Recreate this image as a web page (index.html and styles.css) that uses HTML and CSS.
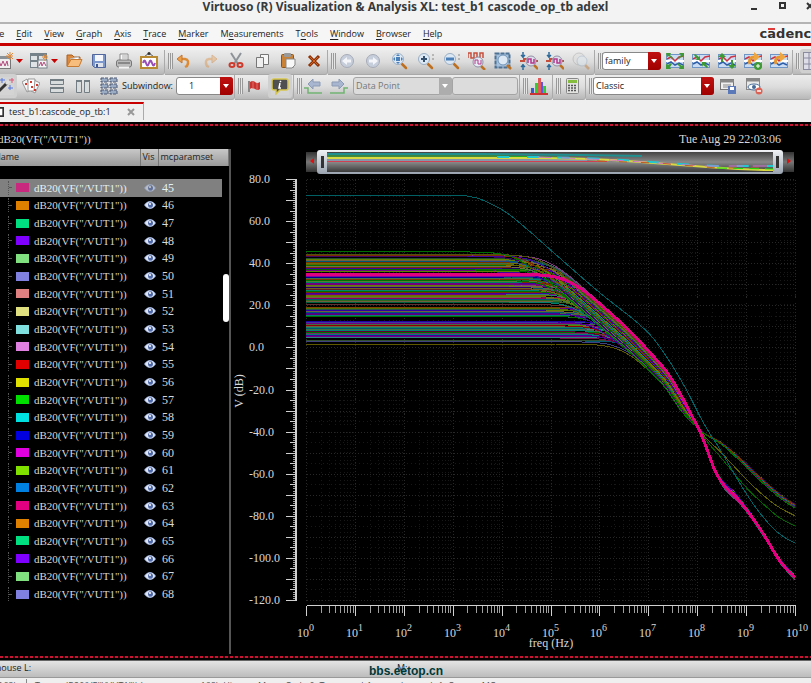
FILE: index.html
```html
<!DOCTYPE html>
<html lang="en">
  <head>
    <meta charset="UTF-8" />
    <meta name="viewport" content="width=device-width, initial-scale=1.0" />
    <title>Virtuoso (R) Visualization &amp; Analysis XL</title>
    <link rel="stylesheet" href="styles.css">
  </head>
  <body>
    <!-- Icon sprite -->
    <svg class="sprite" aria-hidden="true">
      <symbol id="i-graph" viewBox="0 0 18 18">
        <rect x="0.5" y="4.5" width="15" height="12" fill="#eee" stroke="#777" />
        <rect x="0" y="4" width="16" height="3" fill="#8a9297" />
        <path d="M2 14l2-5 2 5 2-5 2 5 2-5 1 5" fill="none" stroke="#b34a7c" />
        <path d="M15 0v8M11 4h7M12 1l6 6M18 1l-6 6" stroke="#dd8a3c" />
      </symbol>
      <symbol id="i-subgraph" viewBox="0 0 18 18">
        <rect x="0.5" y="1.5" width="16" height="14" fill="#dfe3e5" stroke="#76828a" />
        <path d="M0 3h17M1 9h8M8 3v12" stroke="#76828a" stroke-width="2" />
        <rect x="8" y="8" width="9" height="8" fill="#f5f5f5" stroke="#76828a" />
        <path d="M9 14l2-4 1 4 2-4 2 4" fill="none" stroke="#b34a7c" />
        <path d="M15 2v7M12 5h6M13 3l4 4M17 3l-4 4" stroke="#dd8a3c" />
      </symbol>
      <symbol id="i-open" viewBox="0 0 18 18">
        <path d="M2 14V3h5l2 2h6v3" fill="#dc8a3e" stroke="#a85f20" />
        <path d="M5 7l8-2 2 3" fill="#fff" stroke="#bbb" />
        <path d="M2 14.500l4-7h11l-3 7z" fill="#f6bd7d" stroke="#c67a32" />
      </symbol>
      <symbol id="i-save" viewBox="0 0 18 18">
        <path d="M2.500 2.500h13v13h-11l-2-2z" fill="#7d98cc" stroke="#50669c" />
        <rect x="5" y="3" width="8" height="6" fill="#f4f6fb" />
        <rect x="5" y="11" width="8" height="4" fill="#dfe3ec" />
        <rect x="6" y="12" width="2" height="3" fill="#40568f" />
      </symbol>
      <symbol id="i-print" viewBox="0 0 18 18">
        <path d="M5 8V2h8v6" fill="#fbfbfb" stroke="#888" />
        <path d="M7 4h5M7 6h5" stroke="#aaa" />
        <rect x="1.500" y="8" width="15" height="7" rx="2" fill="#bcbcbc" stroke="#777" />
        <path d="M3 11h12" stroke="#888" stroke-width="2" />
        <path d="M4 15.500h10" stroke="#f2f2f2" stroke-width="2" />
      </symbol>
      <symbol id="i-snap" viewBox="0 0 18 18">
        <path d="M4 5l5-4 5 4" fill="none" stroke="#555" />
        <circle cx="9" cy="1.500" r="1.500" fill="#333" />
        <rect x="1" y="5" width="16" height="11" fill="#fff" stroke="#b98a32" stroke-width="2" />
        <path d="M3 11q1.500-5 3 0t3 0 3 0 3 0" fill="none" stroke="#9a4fb8" stroke-width="2" />
      </symbol>
      <symbol id="i-undo" viewBox="0 0 18 18">
        <path d="M5 7h5q5 1 2 7l-2 1" fill="none" stroke="#dd8a35" stroke-width="2.500" />
        <path d="M2 7l5-4v8z" fill="#eba04c" stroke="#c87528" />
      </symbol>
      <symbol id="i-cut" viewBox="0 0 18 18">
        <path d="M4 1l7 11M14 1L7 12" stroke="#8d9398" stroke-width="2" />
        <ellipse cx="5" cy="13" rx="2.500" ry="2" fill="none" stroke="#cc3b2d" stroke-width="2" />
        <ellipse cx="13" cy="13" rx="2.500" ry="2" fill="none" stroke="#cc3b2d" stroke-width="2" />
      </symbol>
      <symbol id="i-copy" viewBox="0 0 18 18">
        <path d="M7.500 2.500h8v10h-8z" fill="#f7f7f7" stroke="#777" />
        <path d="M3.500 5.500h7v10h-7z" fill="#efefef" stroke="#777" />
      </symbol>
      <symbol id="i-paste" viewBox="0 0 18 18">
        <rect x="2.500" y="2.500" width="12" height="13" rx="1" fill="#c98236" stroke="#8e5518" />
        <rect x="5" y="1" width="7" height="4" rx="1" fill="#999" />
        <path d="M7 7h9v6l-3 3H7z" fill="#f8f8f8" stroke="#888" />
      </symbol>
      <symbol id="i-delete" viewBox="0 0 18 18">
        <path d="M4 4l10 10M14 4L4 14" stroke="#8d3208" stroke-width="3" />
        <path d="M5 5l8 8M13 5l-8 8" stroke="#d4631a" stroke-width="1" />
      </symbol>
      <symbol id="i-back" viewBox="0 0 18 18">
        <circle cx="9" cy="9" r="6.500" fill="#c6cddb" stroke="#a6abb6" />
        <path d="M4 9l5-4v2.500h4v3H9V13z" fill="#f3f5f9" />
      </symbol>
      <symbol id="lens" viewBox="0 0 18 18">
        <path d="M12 12l4 4" stroke="#bd7022" stroke-width="2.500" stroke-linecap="round" />
        <circle cx="8" cy="7" r="5.500" fill="#dce9f5" stroke="#9aaec4" stroke-width="1" />
      </symbol>
      <symbol id="i-zfit" viewBox="0 0 18 18">
        <use href="#lens" />
        <path d="M8 2l2 2H6zM8 12l2-2H6zM3 7l2-2v4zM13 7l-2-2v4zM6 5h4v4H6z" fill="#4a7fb8" />
      </symbol>
      <symbol id="i-zin" viewBox="0 0 18 18">
        <use href="#lens" />
        <path d="M8 4v6M5 7h6" stroke="#34506f" stroke-width="2" />
        <path d="M17 2v2M17 6v2" stroke="#888" />
      </symbol>
      <symbol id="i-zout" viewBox="0 0 18 18">
        <use href="#lens" />
        <path d="M4 7h8" stroke="#4a7fb8" stroke-width="3" />
        <path d="M17 2v2M17 6v2" stroke="#888" />
      </symbol>
      <symbol id="i-zwave" viewBox="0 0 18 18">
        <path d="M0 6V1h3v5h3V1h3v5h3V1h3v5" fill="none" stroke="#c64e3c" stroke-width="1.500" />
        <path d="M13 14l4 4" stroke="#bd7022" stroke-width="2.500" />
        <circle cx="10" cy="10" r="5" fill="#e6eaf2" stroke="#8f8fa6" />
        <path d="M7 12V8h3v4h3V8" fill="none" stroke="#b3398d" />
      </symbol>
      <symbol id="i-zbox" viewBox="0 0 18 18">
        <rect x="1.500" y="1.500" width="14" height="14" fill="#a5c0dc" stroke="#4d7193" stroke-width="2" stroke-dasharray="4 1" />
        <path d="M13 13l4 4" stroke="#bd7022" stroke-width="2.500" />
        <circle cx="9" cy="8" r="5" fill="#dce9f5" stroke="#6f93b6" />
      </symbol>
      <symbol id="i-zy" viewBox="0 0 18 18">
        <path d="M3 0v6M1 3l2 2 2-2M3 18v-6M1 15l2-2 2 2" fill="none" stroke="#2c6a9c" stroke-width="1.500" />
        <path d="M0 9h4V7h4M14 9h4" fill="none" stroke="#c64e3c" stroke-width="2" />
        <path d="M14 13l4 4" stroke="#bd7022" stroke-width="2.500" />
        <circle cx="11" cy="9" r="5" fill="#dddfea" stroke="#8f8fa6" />
        <path d="M8 11V7h3v4h3V7" fill="none" stroke="#b3398d" stroke-width="1.500" />
      </symbol>
      <symbol id="i-zoff" viewBox="0 0 18 18">
        <circle cx="7" cy="7" r="6" fill="#ddd" stroke="#999" />
        <path d="M13 13l4 4" stroke="#bd7022" stroke-width="2.500" />
        <circle cx="10" cy="9" r="5" fill="#dce9f5" stroke="#8fa5bb" />
      </symbol>
      <symbol id="wave" viewBox="0 0 18 18">
        <rect x="0.500" y="2.500" width="17" height="13" fill="#c9dcf3" stroke="#6f95c7" />
        <path d="M0 9h18" stroke="#fff" stroke-width="2" />
        <path d="M1 7l4-2 4 4 4-4 5-1" fill="none" stroke="#cc3344" stroke-width="1.500" />
        <path d="M1 12l4-2 4 3 4-2 4 2" fill="none" stroke="#2e5ea8" stroke-width="1.500" />
      </symbol>
      <symbol id="i-wexp" viewBox="0 0 18 18">
        <use href="#wave" />
        <path d="M0 1h5L4 3l3 3-1 1-3-3-2 1zM18 1v5l-2-2-3 3-1-1 3-3-2-2zM0 17v-5l2 1 3-2 1 1-2 3 1 2zM18 17h-5l1-2-3-3 1-1 4 3 2-2z" fill="#3f9a35" />
      </symbol>
      <symbol id="i-wcol" viewBox="0 0 18 18">
        <use href="#wave" />
        <path d="M8 8H3l2-1-3-4 1-1 4 3 1-2zM10 10h5l-2 1 3 4-1 1-4-3-1 2z" fill="#3f9a35" />
      </symbol>
      <symbol id="i-wver" viewBox="0 0 18 18">
        <use href="#wave" />
        <path d="M4 1l4 4H5v5H3V5H0zM14 17l4-4h-3V8h-2v5h-3z" fill="#3f9a35" />
      </symbol>
      <symbol id="i-wload" viewBox="0 0 18 18">
        <use href="#wave" />
        <path d="M6 12q-2-7 5-7" fill="none" stroke="#e8962f" stroke-width="3" />
        <path d="M10 0l6 5-6 5z" fill="#efa63f" />
      </symbol>
      <symbol id="i-wadd" viewBox="0 0 18 18">
        <use href="#i-wload" />
        <circle cx="14" cy="14" r="4" fill="#3f9a35" />
        <path d="M14 12v4M12 14h4" stroke="#fff" />
      </symbol>
      <symbol id="i-gridlines" viewBox="0 0 18 18">
        <rect x="0.500" y="0.500" width="17" height="17" fill="#dedee8" stroke="#8a8aa0" />
        <path d="M0 6h18M0 12h18M6 0v18M12 0v18" stroke="#8a8aa0" />
      </symbol>
      <symbol id="i-wand" viewBox="0 0 18 18">
        <path d="M1 16L11 6" stroke="#333" stroke-width="3" />
        <path d="M10 7l3-3" stroke="#ddd" stroke-width="3" />
        <path d="M6 1v5M4 3h5M14 8v5M12 11h5" stroke="#5577dd" />
        <path d="M16 1v5M13 3h5" stroke="#dd5577" />
      </symbol>
      <symbol id="i-cards" viewBox="0 0 18 18">
        <path d="M0 5l5-3 4 11-4 2z" fill="#f5f5f5" stroke="#999" />
        <path d="M12 3l6 3-5 10-4-2z" fill="#f5f5f5" stroke="#999" />
        <path d="M6 2h7l-1 12H6z" fill="#fff" stroke="#999" />
        <path d="M8 4h2v2H8zM9 9h2v2H9zM14 7h2v2h-2zM3 6h2v2H3zM12 12h2v2h-2z" fill="#d33a2c" />
      </symbol>
      <symbol id="i-rows" viewBox="0 0 18 18">
        <path d="M2.500 2.500h13v5h-13zM2.500 10.500h13v5h-13z" fill="#d9dcdd" stroke="#737d84" />
        <path d="M2 3h14M2 11h14" stroke="#737d84" stroke-width="2" />
      </symbol>
      <symbol id="i-cols" viewBox="0 0 18 18">
        <path d="M2.500 3.500h5v12h-5zM10.500 3.500h5v12h-5z" fill="#d9dcdd" stroke="#737d84" />
        <path d="M2 4h6M10 4h6" stroke="#737d84" stroke-width="2" />
      </symbol>
      <symbol id="i-cells" viewBox="0 0 18 18">
        <path d="M1 1h7v4H1zM10 1h7v4h-7zM1 7h7v4H1zM10 7h7v4h-7zM1 13h7v4H1zM10 13h7v4h-7z" fill="#9aacc4" stroke="#4c5870" stroke-dasharray="3 1" />
      </symbol>
      <symbol id="i-flag" viewBox="0 0 18 18">
        <path d="M4 4v11" stroke="#888" stroke-width="2" />
        <path d="M5 5q3-2 5 0t5 0v7q-2 2-5 0t-5 0z" fill="#c8332f" />
        <path d="M8 4v8M12 6v7" stroke="#e0736f" />
      </symbol>
      <symbol id="i-info" viewBox="0 0 18 18">
        <path d="M3 2h12q2 0 2 2v7q0 2-2 2H9l-4 4v-4H3q-2 0-2-2V4q0-2 2-2z" fill="#505050" stroke="#d6c54c" stroke-width="1.500" />
        <path d="M10 4l-1 1M9 6l-1 5h2" fill="none" stroke="#fff" stroke-width="1.500" />
      </symbol>
      <symbol id="i-prev" viewBox="0 0 18 18">
        <path d="M0 11h4v5h14" fill="none" stroke="#72b272" stroke-width="1.500" />
        <path d="M4 7l5-5v3h7v4H9v3z" fill="#a8b6cf" stroke="#8c9ab5" />
      </symbol>
      <symbol id="i-hist" viewBox="0 0 18 18">
        <path d="M1 17V11h3v6z" fill="#3a58d0" />
        <path d="M5 17V6h3v11z" fill="#33cc33" />
        <path d="M8 17V1h3v16z" fill="#e35a5a" />
        <path d="M11 17V5h2v12z" fill="#5a5ae0" />
        <path d="M13 17V9h3v8z" fill="#33cc33" />
        <path d="M0 17h18" stroke="#c33" stroke-width="2" />
      </symbol>
      <symbol id="i-calc" viewBox="0 0 18 18">
        <rect x="3.500" y="1.500" width="12" height="15" rx="1" fill="#e2e2e0" stroke="#888" />
        <rect x="5" y="3" width="9" height="3" fill="#86bd3f" />
        <path d="M5 8.500h9M5 11h9M5 13.500h9" stroke="#555" stroke-width="1.500" stroke-dasharray="2 1" />
      </symbol>
      <symbol id="i-wssave" viewBox="0 0 18 18">
        <rect x="1.500" y="2.500" width="13" height="10" fill="#eee" stroke="#777" />
        <path d="M1 4h14" stroke="#888" stroke-width="3" />
        <path d="M4 8h8M4 10h8" stroke="#888" />
        <rect x="9" y="9" width="8" height="8" fill="#5b79b8" />
        <rect x="11" y="10" width="4" height="3" fill="#fff" />
      </symbol>
      <symbol id="i-wsdel" viewBox="0 0 18 18">
        <rect x="1.500" y="1.500" width="13" height="11" fill="#e8e8e8" stroke="#888" />
        <path d="M1 3h14" stroke="#888" stroke-width="3" />
        <ellipse cx="9" cy="10" rx="6" ry="3" fill="#fff" stroke="#456a98" />
        <circle cx="9" cy="10" r="2" fill="#456a98" />
        <circle cx="14" cy="14" r="3.500" fill="#dd6256" />
        <path d="M12 14h4" stroke="#fff" stroke-width="1.500" />
      </symbol>
      <symbol id="i-eye" viewBox="0 0 12 8">
        <path d="M0 4q6-8 12 0-6 8-12 0z" fill="#9fb2dc" />
        <path d="M1 4q2-3 4-3v6q-2 0-4-3zM11 4q-2-3-3-3v6q1 0 3-3z" fill="#dfe6f6" />
        <circle cx="6.500" cy="4" r="2.500" fill="#4e68a8" />
        <circle cx="6" cy="3" r="1" fill="#fff" />
      </symbol>
    </svg>

    <header class="titlebar">
      <h1>Virtuoso (R) Visualization &amp; Analysis XL: test_b1 cascode_op_tb adexl</h1>
      <div class="window-btns">
        <button aria-label="Minimize"><svg viewBox="0 0 8 8"><path d="M1 7h6" stroke="#333" stroke-width="2" /></svg></button>
        <button aria-label="Maximize"><svg viewBox="0 0 8 8"><path d="M2 1h5v5H2z" fill="none" stroke="#333" stroke-width="2" /></svg></button>
        <button aria-label="Close"><svg viewBox="0 0 8 8"><path d="M1 1l6 6M7 1L1 7" stroke="#333" stroke-width="2" /></svg></button>
      </div>
    </header>

    <nav class="menubar">
      <a href="#"><u>F</u>ile</a>
      <a href="#"><u>E</u>dit</a>
      <a href="#"><u>V</u>iew</a>
      <a href="#"><u>G</u>raph</a>
      <a href="#"><u>A</u>xis</a>
      <a href="#"><u>T</u>race</a>
      <a href="#"><u>M</u>arker</a>
      <a href="#">M<u>e</u>asurements</a>
      <a href="#">T<u>o</u>ols</a>
      <a href="#"><u>W</u>indow</a>
      <a href="#"><u>B</u>rowser</a>
      <a href="#"><u>H</u>elp</a>
      <span class="logo">c<span class="logo-a">ā</span>dence</span>
    </nav>

    <!-- File / edit / zoom / strip tools -->
    <div class="toolbar">
      <div class="group group-first">
        <button class="split" aria-label="New window"><svg><use href="#i-graph" /></svg></button>
        <button class="split" aria-label="New subwindow"><svg><use href="#i-subgraph" /></svg></button>
        <button aria-label="Open"><svg><use href="#i-open" /></svg></button>
        <button aria-label="Save"><svg><use href="#i-save" /></svg></button>
        <button aria-label="Print"><svg><use href="#i-print" /></svg></button>
        <button aria-label="Save image"><svg><use href="#i-snap" /></svg></button>
      </div>
      <div class="group handle">
        <button aria-label="Undo"><svg><use href="#i-undo" /></svg></button>
        <button aria-label="Redo" class="off flip"><svg><use href="#i-undo" /></svg></button>
        <button aria-label="Cut"><svg><use href="#i-cut" /></svg></button>
        <button aria-label="Copy"><svg><use href="#i-copy" /></svg></button>
        <button aria-label="Paste"><svg><use href="#i-paste" /></svg></button>
        <button aria-label="Delete"><svg><use href="#i-delete" /></svg></button>
      </div>
      <div class="group handle">
        <button aria-label="Previous view"><svg><use href="#i-back" /></svg></button>
        <button aria-label="Next view" class="flip"><svg><use href="#i-back" /></svg></button>
        <button aria-label="Fit"><svg><use href="#i-zfit" /></svg></button>
        <button aria-label="Zoom in"><svg><use href="#i-zin" /></svg></button>
        <button aria-label="Zoom out"><svg><use href="#i-zout" /></svg></button>
        <button aria-label="Zoom X"><svg><use href="#i-zwave" /></svg></button>
        <button aria-label="Zoom box"><svg><use href="#i-zbox" /></svg></button>
        <button aria-label="Zoom Y"><svg><use href="#i-zy" /></svg></button>
        <button aria-label="Fit Y"><svg><use href="#i-zy" /></svg></button>
        <button aria-label="Fit smith" class="off"><svg><use href="#i-zoff" /></svg></button>
      </div>
      <div class="group handle">
        <span class="combo combo-family"><select aria-label="Trace selection"><option>family</option></select></span>
        <button aria-label="Split strips"><svg><use href="#i-wexp" /></svg></button>
        <button aria-label="Combine strips"><svg><use href="#i-wcol" /></svg></button>
        <button aria-label="Split current strip"><svg><use href="#i-wver" /></svg></button>
        <button aria-label="Append reload"><svg><use href="#i-wadd" /></svg></button>
        <button aria-label="Reload"><svg><use href="#i-wload" /></svg></button>
      </div>
      <div class="group handle group-last">
        <button aria-label="Grid" class="pressed"><svg><use href="#i-gridlines" /></svg></button>
      </div>
    </div>

    <!-- Subwindow / marker / workspace tools -->
    <div class="toolbar">
      <div class="group group-sub">
        <button aria-label="Auto layout" class="pressed"><svg><use href="#i-wand" /></svg></button>
        <button aria-label="Card layout"><svg><use href="#i-cards" /></svg></button>
        <button aria-label="Horizontal layout"><svg><use href="#i-rows" /></svg></button>
        <button aria-label="Vertical layout"><svg><use href="#i-cols" /></svg></button>
        <button aria-label="Grid layout"><svg><use href="#i-cells" /></svg></button>
        <label for="subwindow">Subwindow:</label>
        <span class="combo combo-sub"><select id="subwindow"><option>1</option></select></span>
      </div>
      <div class="group handle">
        <button aria-label="Label"><svg><use href="#i-flag" /></svg></button>
        <button aria-label="Tracking cursor" class="pressed"><svg><use href="#i-info" /></svg></button>
      </div>
      <div class="group handle">
        <button aria-label="Previous point"><svg><use href="#i-prev" /></svg></button>
        <button aria-label="Next point" class="flip"><svg><use href="#i-prev" /></svg></button>
        <span class="combo combo-point"><select aria-label="Step by" disabled><option>Data Point</option></select></span>
        <input class="step" type="text" aria-label="Step value" disabled>
      </div>
      <div class="group handle">
        <button aria-label="Histogram"><svg><use href="#i-hist" /></svg></button>
      </div>
      <div class="group handle">
        <button aria-label="Calculator"><svg><use href="#i-calc" /></svg></button>
      </div>
      <div class="group handle group-last">
        <span class="combo combo-ws"><select aria-label="Workspace"><option>Classic</option></select></span>
        <button aria-label="Save workspace"><svg><use href="#i-wssave" /></svg></button>
        <button aria-label="Delete workspace"><svg><use href="#i-wsdel" /></svg></button>
      </div>
    </div>

    <div class="tabs">
      <div class="tab">
        <svg viewBox="0 0 12 12"><path d="M0 1h11v10H0" fill="#fff" stroke="#333" stroke-width="2" /></svg>
        <span>test_b1:cascode_op_tb:1</span>
        <button aria-label="Close tab"><svg viewBox="0 0 8 8"><path d="M1 1l6 6M7 1L1 7" stroke="#999" stroke-width="2" /></svg></button>
      </div>
    </div>

    <main class="window">
      <div class="window-head">
        <h2>dB20(VF("/VUT1"))</h2>
        <p>Tue Aug 29 22:03:06<br>2023</p>
      </div>
      <div class="window-body">
        <section class="legend">
          <table>
            <thead>
              <tr><th>Name</th><th>Vis</th><th>mcparamset</th></tr>
            </thead>
            <tbody id="traces"></tbody>
          </table>
          <span class="thumb"></span>
        </section>
        <section class="chart">
          <div class="range">
            <button aria-label="Scroll left"><svg viewBox="0 0 10 18"><path d="M3 9l4-3v6z" fill="#e01010" /></svg></button>
            <div class="range-bar">
              <svg viewBox="0 0 446 20" preserveAspectRatio="none">
                <g fill="none">
                  <path d="M0 2h155l100 1 60 1" stroke="#1f8f8f" stroke-width="2" />
                  <path d="M0 4h170l50 1 30 1" stroke="#20b020" />
                  <path d="M0 9.500h200l80 0" stroke="#d04050" />
                  <path d="M0 8h200l60 0" stroke="#8fb0d8" />
                  <path d="M0 6h200q60 0 100 3t80 6 66 3" stroke="#d8d840" stroke-width="2" />
                  <path d="M170 5h40q60 1 100 4t80 5h56" stroke="#20c8d0" stroke-dasharray="12 18" stroke-width="2" />
                  <path d="M210 5q60 2 90 4t75 5h71" stroke="#d070d0" stroke-dasharray="14 10" />
                  <path d="M270 9l60 2 60 5h56" stroke="#c06020" stroke-dasharray="8 14" />
                  <path d="M390 16l56 1" stroke="#10e010" stroke-dasharray="10 6" />
                </g>
              </svg>
            </div>
            <button aria-label="Scroll right"><svg viewBox="0 0 10 18"><path d="M7 9L3 6v6z" fill="#e01010" /></svg></button>
          </div>
          <svg id="plot" class="plot" role="img" aria-label="V (dB) against freq (Hz)"></svg>
        </section>
      </div>
    </main>

    <footer>
      <div class="mousebar">
        <span>mouse L:</span>
        <span class="mouse-m">M:<b>bbs.eetop.cn</b></span>
        <span></span>
      </div>
      <div class="hint">
        <span>168)</span>
        <span>Trace: dB20(VF("/VUT1")) (mcparamset=168); History: MonteCarlo.0; Test: test_b1:cascode_op_tb:1; Corner: MC</span>
      </div>
    </footer>

    <script src="plot.js"></script>
  </body>
</html>
```
FILE: styles.css
```css
* {
  margin: 0;
  padding: 0;
  box-sizing: border-box;
}

html,
body {
  height: 100%;
  overflow: hidden;
}

body {
  display: flex;
  flex-direction: column;
  min-height: 640px;
  background: #efefef;
  color: #222;
  font: 9px/14px "Open Sans", "Noto Sans", sans-serif;
}

button,
select,
input {
  font: inherit;
  color: inherit;
  border: none;
  background: none;
}

.sprite {
  position: absolute;
  width: 0;
  height: 0;
}

/* Title and menus */
.titlebar {
  position: relative;
  height: 24px;
  flex: none;
  background: #f3f3f3;
  border-bottom: 2px solid #b4b4b4;
}

.titlebar h1 {
  font: bold 12px/14px "Noto Sans", sans-serif;
  color: #363a3c;
  text-align: center;
  white-space: nowrap;
}

.window-btns {
  position: absolute;
  top: 2px;
  right: -3px;
  display: flex;
  gap: 20px;
}

.window-btns button,
.tab button {
  width: 8px;
  height: 8px;
  display: flex;
}

.menubar {
  display: flex;
  align-items: center;
  gap: 12px;
  flex: none;
  height: 22px;
  margin-left: -10px;
  border-bottom: 3px solid #c80000;
  background: #f6f6f6;
}

.menubar a {
  color: #222;
  text-decoration: none;
}

.menubar u {
  text-underline-offset: 2px;
}

.logo {
  margin-left: auto;
  margin-right: -9px;
  font: bold 13px/18px "DejaVu Sans", sans-serif;
  color: #333;
}

.logo-a {
  position: relative;
}

.logo-a::before {
  content: "";
  position: absolute;
  left: 1px;
  top: 2px;
  width: 7px;
  height: 2px;
  background: #e03c3c;
}

/* Toolbars */
.toolbar {
  display: flex;
  flex: none;
  height: 25px;
}

.menubar + .toolbar {
  margin-top: 4px;
}

.group {
  display: flex;
  flex: none;
  align-items: center;
  gap: 8px;
  padding: 0 4px 2px 3px;
  background: linear-gradient(#ececec, #dcdcdc 50%, #b8b8b8);
  border-right: 1px solid #aaa;
  border-bottom: 1px solid #a8a8a8;
  border-radius: 0 0 3px 0;
}

.group button {
  width: 18px;
  height: 18px;
  flex: none;
  display: flex;
  align-items: center;
}

.group svg {
  width: 18px;
  height: 18px;
  flex: none;
}

.group .split {
  width: 28px;
  gap: 3px;
}

.split::after {
  content: "";
  width: 7px;
  height: 4px;
  background: #c80000;
  clip-path: polygon(0 0, 100% 0, 50% 100%);
}

.group-first {
  gap: 7px;
  margin-left: -8px;
  width: 173px;
}

.group-sub {
  margin-left: -7px;
}

.group-last {
  flex: 1;
  border-right: none;
}

.handle::before {
  content: "";
  width: 5px;
  height: 16px;
  margin-right: -6px;
  background: repeating-linear-gradient(90deg, #999 0 1px, #e6e6e6 1px 2px);
}

.group .off {
  opacity: 0.4;
}

.flip {
  transform: scaleX(-1);
}

.pressed {
  background: #d4d4d4;
  box-shadow: 0 0 0 3px #d0d0d0;
  border-radius: 1px;
}

.group label {
  margin: 0 -2px 0 -4px;
}

.combo {
  position: relative;
  height: 18px;
  margin: 0 -3px;
}

.combo::before {
  content: "";
  position: absolute;
  right: 0;
  top: 0;
  width: 13px;
  height: 100%;
  background: linear-gradient(#c01010, #a00000);
  border-radius: 0 3px 3px 0;
  pointer-events: none;
}

.combo::after {
  content: "";
  position: absolute;
  right: 4px;
  top: 7px;
  width: 6px;
  height: 4px;
  background: #fff;
  clip-path: polygon(0 0, 100% 0, 50% 100%);
  pointer-events: none;
}

.combo select {
  appearance: none;
  width: 100%;
  height: 18px;
  padding-left: 2px;
  background: #fff;
  border: 1px solid #888;
  border-radius: 3px;
  opacity: 1;
}

.combo-family {
  width: 59px;
}

.combo-sub {
  width: 57px;
}

.combo-sub select {
  padding-left: 12px;
}

.combo-point {
  width: 99px;
}

.combo-point select {
  background: #dcdcdc;
  border-color: #a4a4a4;
  color: #777;
}

.combo-point::before {
  background: #adadad;
}

.combo-ws {
  width: 121px;
}

.step {
  width: 66px;
  height: 18px;
  margin: 0 -3px 0 -5px;
  background: #dcdcdc;
  border: 1px solid #a4a4a4;
  border-radius: 3px;
}

/* Tabs */
.tabs {
  display: flex;
  flex: none;
  height: 22px;
  padding-top: 2px;
}

.tab {
  display: flex;
  align-items: center;
  gap: 5px;
  width: 144px;
  height: 18px;
  padding-right: 8px;
  border-top: 2px solid #c80000;
  border-right: 1px solid #aaa;
}

.tab > svg {
  width: 10px;
  height: 12px;
  margin-left: -6px;
}

.tab button {
  margin-left: auto;
}

/* Graph window */
.window {
  display: flex;
  flex-direction: column;
  flex: 1;
  min-height: 0;
  background: #000;
  color: #d8d8d8;
  font: 12px/14px "Liberation Serif", serif;
}

.window::before,
.window::after {
  content: "";
  height: 2px;
  flex: none;
  background: repeating-linear-gradient(90deg, #c81432 0 3px, #300008 3px 5px);
}

.window::before {
  margin-top: 2px;
}

.window::after {
  margin-bottom: 2px;
}

.window-head {
  display: flex;
  justify-content: space-between;
  flex: none;
  height: 24px;
  padding: 6px 30px 0 0;
  overflow: hidden;
}

.window-head h2 {
  margin-left: -2px;
  font: 11px/14px "Liberation Serif", serif;
}

.window-head p {
  line-height: 15px;
}

.window-body {
  display: flex;
  flex: 1;
  min-height: 0;
}

/* Trace list */
.legend {
  position: relative;
  width: 231px;
  flex: none;
  margin: -1px 0 2px;
  border-right: 2px solid #555;
}

.legend table {
  width: 100%;
  height: 454px;
  border-collapse: collapse;
  table-layout: fixed;
}

.legend th {
  height: 17px;
  text-align: left;
  font: 9px/14px "Open Sans", "Noto Sans", sans-serif;
  color: #222;
  background: linear-gradient(#c8c8c8, #999);
  border-right: 1px solid #777;
  padding-left: 2px;
  padding-bottom: 2px;
}

.legend th:first-child {
  width: 140px;
  padding-left: 0;
  text-indent: -6px;
}

.legend th:nth-child(2) {
  width: 18px;
}

.legend .spacer td {
  height: 13px;
  background: none;
}

.legend td {
  font-size: 12px;
  line-height: 14px;
  padding: 0 0 0 4px;
  vertical-align: middle;
}

.legend td:first-child {
  padding-left: 8px;
}

.trace {
  display: flex;
  align-items: center;
  gap: 5px;
  font-size: 11px;
}

.branch {
  width: 4px;
  align-self: stretch;
  border-left: 1px dotted #555;
  margin-right: -1px;
  background: linear-gradient(#555, #555) 0 50% / 100% 1px no-repeat;
}

.swatch {
  width: 13px;
  height: 9px;
}

.legend td svg {
  display: block;
  width: 12px;
  height: 8px;
}

.selected td {
  background: #808080;
  color: #e4f2f2;
}

.selected td:last-child {
  background: linear-gradient(#808080, #808080) 0 0 / 64px 100% no-repeat;
}

.selected svg {
  opacity: 0.6;
}

.thumb {
  position: absolute;
  right: 0;
  top: 125px;
  width: 6px;
  height: 48px;
  border-radius: 3px;
  background: #fff;
}

/* Chart */
.chart {
  display: flex;
  flex-direction: column;
  flex: 1;
  min-width: 0;
}

.range {
  display: flex;
  align-items: center;
  flex: none;
  height: 24px;
  margin: 0 17px 0 75px;
}

.range button {
  width: 11px;
  height: 20px;
  background: linear-gradient(#333, #777 50%, #333);
}

.range button svg {
  width: 10px;
  height: 18px;
}

.range-bar {
  flex: 1;
  height: 24px;
  padding: 2px 10px;
  border-radius: 3px;
  background:
    linear-gradient(#333, #333) 4px 50% / 3px 12px no-repeat,
    linear-gradient(#333, #333) calc(100% - 4px) 50% / 3px 12px no-repeat,
    linear-gradient(#f0f2f5, #9aa4b0);
}

.range-bar svg {
  display: block;
  width: 100%;
  height: 20px;
  background: linear-gradient(#444, #8a8a8a 50%, #3a3a3a);
}

.plot {
  flex: 1;
  width: 100%;
  min-height: 0;
}

.plot text {
  fill: #d8d8d8;
  font: 12px "Liberation Serif", serif;
}

.plot .exp {
  font-size: 10px;
}

.plot path {
  fill: none;
  shape-rendering: crispEdges;
}

.grid-major {
  stroke: #282828;
  stroke-dasharray: 1 2;
}

.grid-minor {
  stroke: #181818;
  stroke-dasharray: 1 3;
}

.axis {
  stroke: #d0d0d0;
}

.axis-minor {
  stroke: #a0a0a0;
}

/* Status lines */
footer {
  flex: none;
  height: 23px;
  border-top: 1px solid #666;
}

.mousebar {
  display: grid;
  grid-template-columns: 1fr auto 1fr;
  height: 17px;
  margin-left: -7px;
  background: linear-gradient(#e4e4e4, #bcbcbc);
  border-bottom: 1px solid #999;
}

.mouse-m {
  position: relative;
  width: 10px;
}

.mouse-m b {
  position: absolute;
  left: -28px;
  top: 2px;
  font: bold 12px/16px "Liberation Sans", sans-serif;
  color: #003838;
}

.hint {
  display: flex;
  gap: 10px;
  padding-top: 1px;
  margin-left: -2px;
  white-space: nowrap;
  color: #555;
}

.hint span + span {
  border-left: 1px solid #888;
  padding-left: 8px;
}
```
FILE: plot.js
```js
// Legend rows
const legendColors = [
  "#c8287d", "#e08000", "#00e080", "#8000ff", "#80e080", "#8080e0",
  "#e08080", "#e0e080", "#80e0e0", "#e080e0", "#e00000", "#e0e000",
  "#00e000", "#00e0e0", "#0000e0", "#e000e0", "#80e000", "#0080e0",
  "#e00080", "#e08000", "#00e080", "#8000ff", "#80e080", "#8080e0",
];

document.getElementById("traces").innerHTML =
  '<tr class="spacer"><td colspan="3"></td></tr>' +
  legendColors
    .map(
      (color, i) => `<tr${i === 0 ? ' class="selected"' : ""}>
        <td><span class="trace"><i class="branch"></i><i class="swatch" style="background:${color}"></i>dB20(VF("/VUT1"))</span></td>
        <td><svg><use href="#i-eye" /></svg></td>
        <td>${45 + i}</td>
      </tr>`
    )
    .join("");

// Low frequency gain (dB) and colour of each Monte Carlo run
const runs = [
  [45.4, "#007000"], [44.1, "#505010"], [43.7, "#803880"], [43.2, "#400060"],
  [42.1, "#205030"], [41.6, "#306868"], [41.1, "#204888"], [40.5, "#783000"],
  [39.8, "#707000"], [39.2, "#806800"], [38.6, "#707040"], [37.8, "#200060"],
  [37, "#107000"], [36.5, "#308000"], [35.9, "#4000a0"], [33.8, "#8000a0"],
  [33.2, "#000090"], [32.5, "#803000"], [32.1, "#107030"], [31.4, "#508030"],
  [31, "#008060"], [30.3, "#700080"], [29.7, "#804070"], [29.2, "#707030"],
  [28.6, "#200070"], [28.1, "#706020"], [27.5, "#602020"], [27, "#700070"],
  [26.5, "#608000"], [26, "#707000"], [25.4, "#307878"], [24.8, "#706800"],
  [24, "#900058"], [23.3, "#900058"], [22.5, "#306820"], [21.9, "#706040"],
  [21.3, "#006040"], [20.3, "#603030"], [19.2, "#804000"], [18.7, "#507000"],
  [18.1, "#205050"], [17.5, "#3000a0"], [16.8, "#005870"], [16.2, "#4000a0"],
  [15.7, "#600070"], [15.1, "#107000"], [14.5, "#404080"], [12.5, "#2000a0"],
  [11.9, "#3838a0"], [11.1, "#407040"], [10.3, "#900000"], [9.5, "#108060"],
  [8.9, "#408080"], [8.4, "#703070"], [7.5, "#600030"], [6.8, "#703060"],
  [6.2, "#008070"], [5.6, "#008080"], [4.9, "#308080"], [4.5, "#701040"],
  [3.5, "#305030"], [2.7, "#404080"], [1.6, "#605800"],
];

// Roll-off curves as [decade, dB]
const fast = [
  [0, 141.9], [6.01, 21.4], [6.63, 8.1], [7.03, -1.9], [7.4, -11.9],
  [7.65, -21.4], [7.85, -30.5], [8.06, -40],
];
const slow = [
  [0, 130.5], [5.34, 23.8], [6.22, 5.7], [6.67, -3.3], [7.03, -11.4],
  [7.34, -19], [7.65, -29.5], [7.85, -34.8], [8.06, -39],
];
const steepTail = [
  [8.06, -40], [8.18, -47.1], [8.3, -54.8], [8.38, -59.5], [8.61, -67.1],
  [8.77, -70.5], [8.98, -76.2], [9.39, -90], [9.69, -101.4], [10, -109.5],
];
const flatTail = [
  [8.06, -39.5], [8.18, -41.4], [8.47, -45.2], [8.88, -53.3], [9.28, -62.2],
  [9.59, -68.5], [9.8, -72.4], [10, -75.2],
];
const oliveTail = [
  [8.06, -39.5], [8.18, -43], [8.47, -49.5], [9.02, -63], [9.39, -71],
  [9.69, -76.2], [10, -80],
];
const greenTail = [
  [8.06, -39.5], [8.18, -44], [8.47, -51.9], [9.02, -67], [9.39, -75.2],
  [9.69, -81], [10, -84.8],
];
const outlier = [
  [0, 72.4], [3.05, 72.4], [3.46, 71.2], [3.76, 68.4], [4.07, 64.5],
  [4.52, 56.2], [4.99, 46.5], [5.97, 26.7], [7.03, 6.2], [7.34, -3.3],
  [7.65, -14.8], [7.85, -23.3], [8.06, -32.9], [8.26, -41], [8.47, -48.6],
  [8.67, -56.5], [8.98, -68.6], [9.28, -78.6], [9.59, -86.7], [9.8, -90.5],
  [10, -92.9],
];

// Monotone cubic interpolation
function slope(points, i) {
  return (points[i + 1][1] - points[i][1]) / (points[i + 1][0] - points[i][0]);
}

function tangent(points, i) {
  if (i === 0) return slope(points, 0);
  if (i === points.length - 1) return slope(points, i - 1);
  const a = slope(points, i - 1);
  const b = slope(points, i);
  return a * b <= 0 ? 0 : (2 * a * b) / (a + b);
}

function lookup(points, d) {
  let i = 0;
  while (i < points.length - 2 && d > points[i + 1][0]) i++;
  const h = points[i + 1][0] - points[i][0];
  const t = Math.min(1, (d - points[i][0]) / h);
  const t2 = t * t;
  const t3 = t2 * t;
  return (
    (2 * t3 - 3 * t2 + 1) * points[i][1] +
    (t3 - 2 * t2 + t) * h * tangent(points, i) +
    (3 * t2 - 2 * t3) * points[i + 1][1] +
    (t3 - t2) * h * tangent(points, i + 1)
  );
}

function sample(fn) {
  const points = [];
  for (let d = 0; d <= 10.001; d += 0.05) points.push([d, fn(d)]);
  return points;
}

function response(gain, speed, tail, spread) {
  return sample((d) => {
    let edge;
    if (d < 8.06) {
      edge = lookup(slow, d) * (1 - speed) + lookup(fast, d) * speed;
    } else {
      const knee = tail === steepTail ? Math.exp(-Math.pow((d - 8.6) / 0.25, 2)) * 2 : 0;
      edge = lookup(tail, d) + spread * (knee + 1) * Math.min(1, d - 8.06);
    }
    return -10 * Math.log10(Math.pow(10, -gain / 10) + Math.pow(10, -edge / 10));
  });
}

function draw() {
  const plot = document.getElementById("plot");
  const width = plot.clientWidth;
  const height = plot.clientHeight;
  const left = 75;
  const right = width - 16;
  const top = 5;
  const bottom = height - 56;

  const px = (d) => left + ((right - left) * d) / 10;
  const py = (db) => top + ((bottom - top) * (80 - db)) / 200;
  const line = (x0, y0, x1, y1) =>
    `M${Math.round(x0)}.5 ${Math.round(y0)}.5L${Math.round(x1)}.5 ${Math.round(y1)}.5`;
  const path = (d, attrs) => `<path d="${d}" ${attrs} />`;
  const curve = (points) =>
    "M" + points.map((p) => px(p[0]).toFixed(1) + " " + py(p[1]).toFixed(1)).join("L");

  let major = "";
  let minor = "";
  let axis = "";
  let axisMinor = "";
  let labels = "";

  // Vertical axis
  for (let db = 80; db >= -120; db--) {
    const y = py(db);
    if (db % 10 === 0) {
      major += line(left, y, right, y);
      axis += line(54, y, 65, y);
    } else if (db % 5 === 0) {
      minor += line(left, y, right, y);
      axis += line(58, y, 65, y);
    } else {
      axisMinor += line(61, y, 65, y);
    }
    if (db % 20 === 0) {
      labels += `<text x="18" y="${Math.round(y) + 4}">${db.toFixed(1)}</text>`;
    }
  }
  axis += line(65, top, 65, bottom) + line(64, top, 64, bottom);

  // Frequency axis
  const base = bottom + 5;
  axis += line(left, base, right, base);
  for (let d = 0; d <= 10; d++) {
    major += line(px(d), top, px(d), bottom);
    axis += line(px(d), base, px(d), base + 10);
    labels += `<text x="${Math.round(px(d)) - 9}" y="${bottom + 37}">10<tspan class="exp" dy="-6">${d}</tspan></text>`;
    for (let k = 2; k < 10 && d < 10; k++) {
      const x = px(d + Math.log10(k));
      minor += line(x, top, x, bottom);
      axisMinor += line(x, base, x, base + 7);
    }
  }
  const middle = Math.round((left + right) / 2);
  labels += `<text x="${middle}" y="${bottom + 47}" text-anchor="middle">freq (Hz)</text>`;
  labels += `<text text-anchor="middle" transform="translate(12 ${Math.round((top + bottom) / 2) + 1}) rotate(-90)">V (dB)</text>`;

  // Traces, with a second run between close neighbours
  const all = [];
  runs.forEach((run, i) => {
    all.push(run);
    const next = runs[i + 1];
    if (next && run[0] - next[0] < 0.95) {
      all.push([(run[0] + next[0]) / 2, runs[(i * 7) % runs.length][1]]);
    }
  });

  let traces = "";
  for (let i = all.length - 1; i >= 0; i--) {
    const last = i === all.length - 1;
    const speed = last ? 0 : Math.min(1, ((i * 0.618) % 1) * 1.3);
    const spread = ((i * 0.377) % 1) * 2 - 1;
    const tail = speed > 0.4 ? steepTail : flatTail;
    traces += path(curve(response(all[i][0], speed, tail, spread)), `stroke="${all[i][1]}"`);
  }
  traces += path(curve(response(39.5, 0.3, oliveTail, 0)), 'stroke="#606000"');
  traces += path(curve(response(36.8, 0.2, greenTail, 0)), 'stroke="#006400"');
  traces += path(curve(sample((d) => lookup(outlier, d))), 'stroke="#006064"');
  traces += path(curve(response(34.7, 0.95, steepTail, 0)), 'stroke="#e00080" stroke-width="3"');

  plot.innerHTML =
    path(minor, 'class="grid-minor"') +
    path(major, 'class="grid-major"') +
    traces +
    path(axisMinor, 'class="axis-minor"') +
    path(axis, 'class="axis"') +
    labels;
}

draw();
window.addEventListener("resize", draw);
```
